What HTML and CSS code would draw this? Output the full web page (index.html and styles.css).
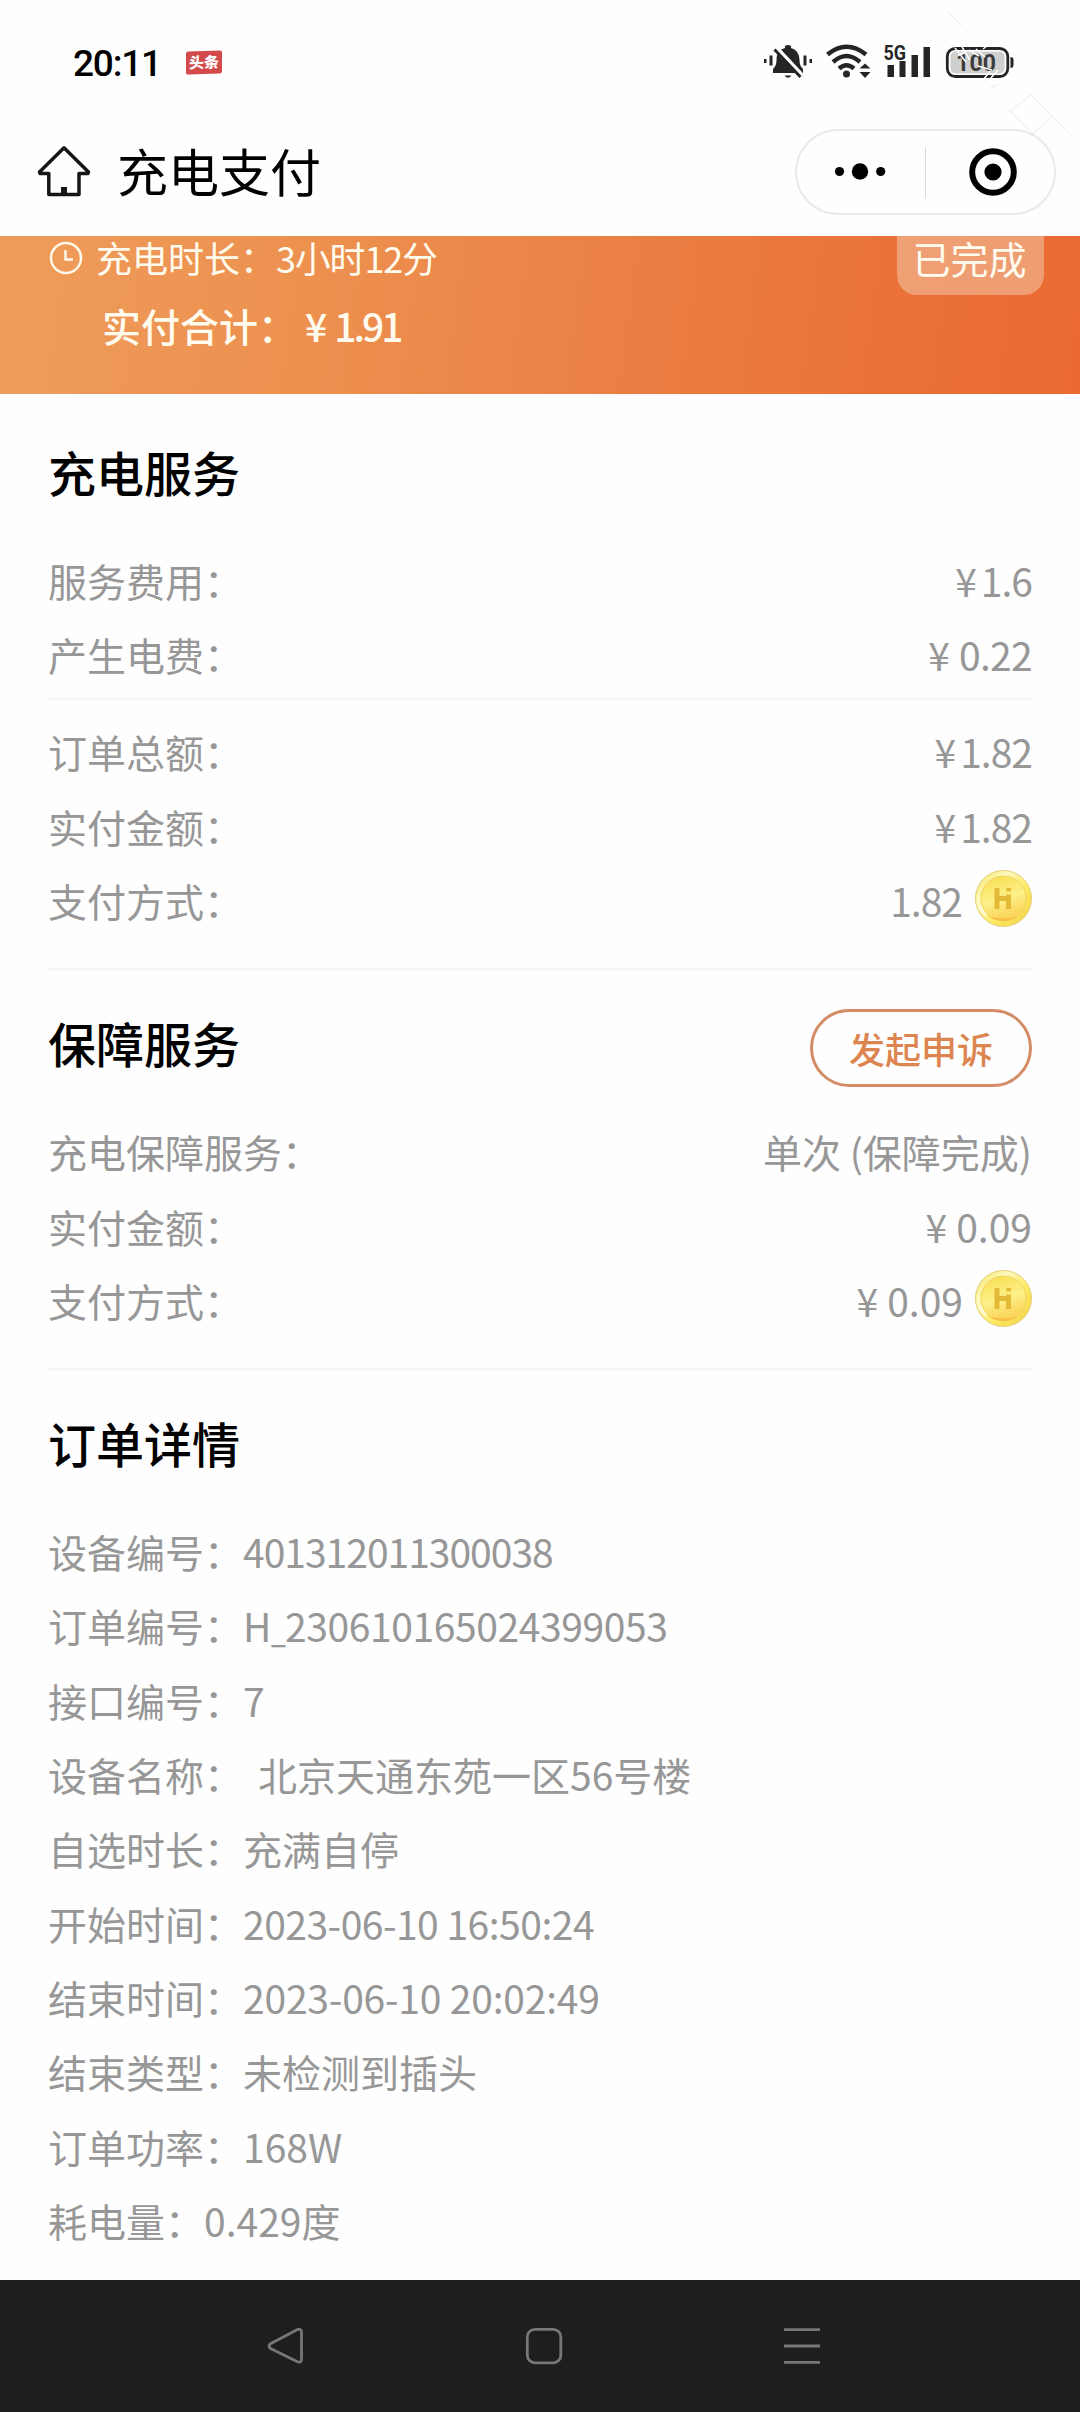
FILE: index.html
```html
<!DOCTYPE html>
<html lang="zh-CN">
<head>
<meta charset="utf-8">
<title>充电支付</title>
<link rel="stylesheet" href="styles.css">
</head>
<body>
<svg class="defs" width="0" height="0" aria-hidden="true">
  <defs>
    <linearGradient id="rim" x1="0" y1="0" x2="1" y2="1">
      <stop offset="0" stop-color="#f3e04a"/><stop offset=".3" stop-color="#fffac0"/><stop offset=".6" stop-color="#fdea62"/><stop offset="1" stop-color="#f0cf48"/>
    </linearGradient>
    <linearGradient id="face" x1=".3" y1="0" x2=".6" y2="1">
      <stop offset="0" stop-color="#f9df55"/><stop offset=".5" stop-color="#fdf08a"/><stop offset="1" stop-color="#fbcf50"/>
    </linearGradient>
    <symbol id="coin" viewBox="0 0 57 57">
      <circle cx="28.5" cy="28.5" r="28" fill="url(#rim)" stroke="#e3cd74" stroke-width="1"/>
      <path d="M3 37Q6 43 11 46L14 41Q9 38 8 34Z" fill="#fffbd8"/>
      <circle cx="28.5" cy="28.5" r="22.5" fill="url(#face)" stroke="#f2d65c" stroke-width="1"/>
      <path d="M13 46Q28 56 43 46Q28 51 13 46Z" fill="#f8bd48"/>
      <path d="M22 18V39M22 28.500H33.500V39M33.500 29V24.500" fill="none" stroke="#e2ba38" stroke-width="5"/>
      <path d="M31.500 18H36V21.500H31.500Z" fill="#e2ba38"/>
    </symbol>
  </defs>
</svg>

<header class="top">
  <div class="status">
    <span class="clock">20:11</span>
    <span class="news">头条</span>
    <svg class="tray" width="320" height="124" viewBox="760 0 320 124">
      <g fill="#252525">
        <path d="M773 73V69Q776.500 66 776.500 60Q776.500 50 785 48V46Q788 44 791 46V48Q799 50 799.500 60Q799.500 66 803 69V73Z"/>
        <path d="M784.500 75.500H791.500Q788 80 784.500 75.500Z"/>
        <path d="M764 59h2.500v4H764ZM769.500 55.500h3v10h-3ZM803.500 55.500h3v10h-3ZM809.500 59h2.500v4h-2.500Z"/>
        <path d="M859.500 68.500L865 63.500 870.500 68.500ZM859.500 72L865 78 870.500 72Z"/>
        <circle cx="846.500" cy="74" r="3.500"/>
        <path d="M887.500 65h6.500v12h-6.500ZM899.500 61h6v16h-6ZM911.500 55h6.500v22h-6.500ZM923.500 47h6.500v30h-6.500Z"/>
        <path d="M1010.500 57Q1013.500 57 1013.500 60V65Q1013.500 68 1010.500 68Z"/>
      </g>
      <path d="M776 47L803 76" stroke="#fefefe" stroke-width="4"/>
      <path d="M774.500 49.500L800.500 77" stroke="#252525" stroke-width="3"/>
      <g fill="none" stroke="#252525" stroke-width="4.400">
        <path d="M827.500 54.500Q846.500 39 866 54.500"/>
        <path d="M833 62Q846.500 50 860 62"/>
        <path d="M839 68.500Q846.500 62 854 68.500"/>
      </g>
      <text class="net" x="883.500" y="60" textLength="22.500" lengthAdjust="spacingAndGlyphs">5G</text>
      <rect x="947.300" y="48.500" width="60.500" height="28" rx="8" fill="#fefefe" stroke="#252525" stroke-width="2.800"/>
      <rect x="950.500" y="51.500" width="54" height="22" rx="5" fill="#cfcfcf"/>
      <text class="charge" x="956" y="71" textLength="40">100</text>
      <g fill="none" stroke="#fefefe" stroke-width="1.500">
        <path d="M955 48L966 62M962 47L970 60M969 50L979 56M976 49L985 57M978 66L992 70M984 79L990 71M990 79L998 70M983 49L987 46M958 55L966 52"/>
      </g>
      <path class="scratch" d="M947 11L962 26M1010 111L1033 134M1031 95L1052 116L1070 134M1052 116L1033 134M1031 95L1010 111M990 88L998 85"/>
    </svg>
  </div>
  <div class="bar">
    <svg class="home" width="54" height="54" viewBox="37 145 54 54" fill="none" stroke="#161616" stroke-width="3.500" stroke-linejoin="round" stroke-linecap="round">
      <path d="M48.800 173.500H40L39.500 172L64 147.800L88.500 172L88 173.500H79V194.500H48.800Z"/>
      <path d="M64 187V193" stroke-width="6" stroke-linecap="butt"/>
    </svg>
    <h1 class="title">充电支付</h1>
    <div class="capsule">
      <svg class="more" width="129" height="86" viewBox="0 0 129 86"><circle cx="42.500" cy="42.500" r="4.600"/><circle cx="63" cy="42.500" r="8.200"/><circle cx="83.700" cy="42.500" r="4.600"/></svg>
      <svg class="exit" width="128" height="86" viewBox="0 0 128 86"><circle cx="67" cy="43" r="20.800" fill="none" stroke="#000" stroke-width="6"/><circle cx="67" cy="43" r="8.600"/></svg>
    </div>
  </div>
</header>

<section class="hero">
  <div>
    <div class="duration">
      <svg width="34" height="34" viewBox="0 0 34 34" fill="none" stroke="#fff8e8" stroke-width="2.500"><circle cx="17" cy="17" r="15"/><path d="M16.500 9V18.500H24"/></svg>
      <span>充电时长：</span><span class="elapsed">3小时12分</span>
    </div>
    <div class="total"><span>实付合计：</span><i class="yen">¥</i><span class="sum">1.91</span></div>
  </div>
  <div class="state">已完成</div>
</section>

<main class="sheet">
  <h2 class="heading">充电服务</h2>
  <div class="row"><span>服务费用：</span><span class="value tight"><i class="yen">¥</i>1.6</span></div>
  <div class="row"><span>产生电费：</span><span class="value"><i class="yen">¥</i><span class="cents">0.22</span></span></div>
  <hr class="rule inner">
  <div class="row"><span>订单总额：</span><span class="value tight"><i class="yen">¥</i>1.82</span></div>
  <div class="row"><span>实付金额：</span><span class="value tight"><i class="yen">¥</i>1.82</span></div>
  <div class="row"><span>支付方式：</span><span class="value tight">1.82<svg class="coin"><use href="#coin"/></svg></span></div>
  <hr class="rule">
  <div class="heading-row"><h2 class="heading">保障服务</h2><button class="appeal">发起申诉</button></div>
  <div class="row"><span>充电保障服务：</span><span class="value">单次 (保障完成)</span></div>
  <div class="row"><span>实付金额：</span><span class="value"><i class="yen">¥</i>0.09</span></div>
  <div class="row"><span>支付方式：</span><span class="value"><i class="yen">¥</i>0.09<svg class="coin"><use href="#coin"/></svg></span></div>
  <hr class="rule">
  <h2 class="heading">订单详情</h2>
  <div class="row detail"><span>设备编号：</span><span class="device">401312011300038</span></div>
  <div class="row detail"><span>订单编号：</span><span class="order">H<span class="underscore">_</span>230610165024399053</span></div>
  <div class="row detail"><span>接口编号：</span><span>7</span></div>
  <div class="row detail"><span>设备名称：</span><span class="place">北京天通东苑一区56号楼</span></div>
  <div class="row detail"><span>自选时长：</span><span>充满自停</span></div>
  <div class="row detail"><span>开始时间：</span><span class="start">2023-06-10 16:50:24</span></div>
  <div class="row detail"><span>结束时间：</span><span class="end">2023-06-10 20:02:49</span></div>
  <div class="row detail"><span>结束类型：</span><span>未检测到插头</span></div>
  <div class="row detail"><span>订单功率：</span><span>168W</span></div>
  <div class="row detail"><span>耗电量：</span><span>0.429度</span></div>
</main>

<nav class="keys">
  <svg width="1080" height="132" viewBox="0 2280 1080 132" fill="none" stroke="#777" stroke-width="2.800" stroke-linejoin="round">
    <path d="M270 2344L297 2329.800Q301.500 2328 301.500 2332V2359.500Q301.500 2363.500 297 2361.500L270.500 2348.500Q268 2346 270 2344Z"/>
    <rect x="527.300" y="2329.300" width="33.500" height="33.500" rx="7.500"/>
    <path d="M784 2329.700H820M784 2346H820M784 2362.400H820"/>
  </svg>
</nav>
</body>
</html>
```
FILE: styles.css
```css
* { box-sizing: border-box; }
body {
  margin: 0;
  width: 1080px;
  height: 2412px;
  display: flex;
  flex-direction: column;
  overflow: hidden;
  background: #fefefe;
  color: #979797;
  font: 400 39px/1.2 "Noto Sans CJK SC", sans-serif;
}
.defs { position: absolute; }
svg { display: block; flex: none; overflow: visible; }
h1, h2 { margin: 0; }
i { font-style: normal; }

.top { height: 236px; color: #000; }
.status { height: 124px; display: flex; align-items: center; padding-left: 73px; }
.clock { width: 113px; padding-top: 3px; font: 500 37px/44px Roboto, sans-serif; letter-spacing: -1.2px; }
.news {
  width: 36px;
  height: 23px;
  background: #d24a4c;
  border-radius: 2px;
  color: #fff;
  font-size: 15px;
  font-weight: 900;
  line-height: 21px;
  text-align: center;
  transform: skewY(-2deg);
}
.tray { margin-left: auto; }
.net { font: 700 20px Roboto, sans-serif; fill: #252525; }
.charge { font: 700 23px Roboto, sans-serif; fill: #3a3a3a; }
.scratch { fill: none; stroke: #ececec; stroke-width: 1; }

.bar { height: 96px; display: flex; align-items: center; padding: 0 24px 0 37px; }
.title { margin-left: 26px; padding-bottom: 4px; font-size: 51px; font-weight: 400; line-height: 60px; }
.capsule {
  width: 261px;
  height: 86px;
  margin-left: auto;
  display: flex;
  align-items: center;
  border: 2px solid #e9e9e9;
  border-radius: 43px;
}
.more { background: linear-gradient(#d9d9d9, #d9d9d9) right center / 1.5px 51px no-repeat; }

.hero {
  height: 158px;
  padding: 0 36px 0 49px;
  display: flex;
  justify-content: space-between;
  align-items: flex-start;
  color: #fffbee;
  background: linear-gradient(98deg, #ee9c5b 0%, #ed914f 28%, #eb8447 50%, #ea7339 80%, #ea6932 100%);
}
.duration { height: 44px; display: flex; align-items: center; font-size: 36px; }
.duration svg { margin-right: 13px; }
.elapsed { letter-spacing: -1.2px; }
.total { height: 50px; margin: 20px 0 0 53px; display: flex; align-items: center; font-weight: 500; }
.total .yen { margin: 0 7px 0 8px; }
.sum { letter-spacing: -3px; }
.state {
  width: 147px;
  height: 59px;
  padding-bottom: 12px;
  border-radius: 0 0 20px 20px;
  background: rgba(243, 205, 175, .5);
  font-size: 38px;
  line-height: 44px;
  text-align: center;
  text-indent: -2px;
}

.sheet { height: 1886px; padding: 39px 48px 0; }
.heading { height: 110px; color: #000; font-size: 48px; font-weight: 500; line-height: 77px; }
.heading-row { display: flex; justify-content: space-between; }
.row { height: 74.3px; display: flex; justify-content: space-between; align-items: center; white-space: pre; }
.detail { justify-content: flex-start; }
.value { display: flex; align-items: center; }
.yen { margin-right: 9px; }
.tight { letter-spacing: -1px; }
.tight .yen { margin-right: 5px; }
.cents { letter-spacing: -.7px; }
.coin { width: 57px; height: 57px; margin-left: 12px; position: relative; top: -2px; }
.tight .coin { margin-left: 13px; }
.rule { height: 3px; margin: 31px 0 33px; border: 0; background: #f6f6f6; }
.rule.inner { margin: 5px 0 15px; }
.appeal {
  width: 222px;
  height: 78px;
  margin-top: 5px;
  padding: 0;
  border: 3px solid #d38c66;
  border-radius: 39px;
  background: transparent;
  color: #dd8551;
  font: 500 36px/1.2 "Noto Sans CJK SC", sans-serif;
}
.device { letter-spacing: -1px; }
.order { letter-spacing: -.4px; }
.underscore { display: inline-block; width: 14px; transform: scaleX(.68); transform-origin: left; }
.start { letter-spacing: -.5px; }
.end { letter-spacing: -.2px; }
.place { margin-left: 15px; }

.keys { height: 132px; background: #1e1e1e; }
```
